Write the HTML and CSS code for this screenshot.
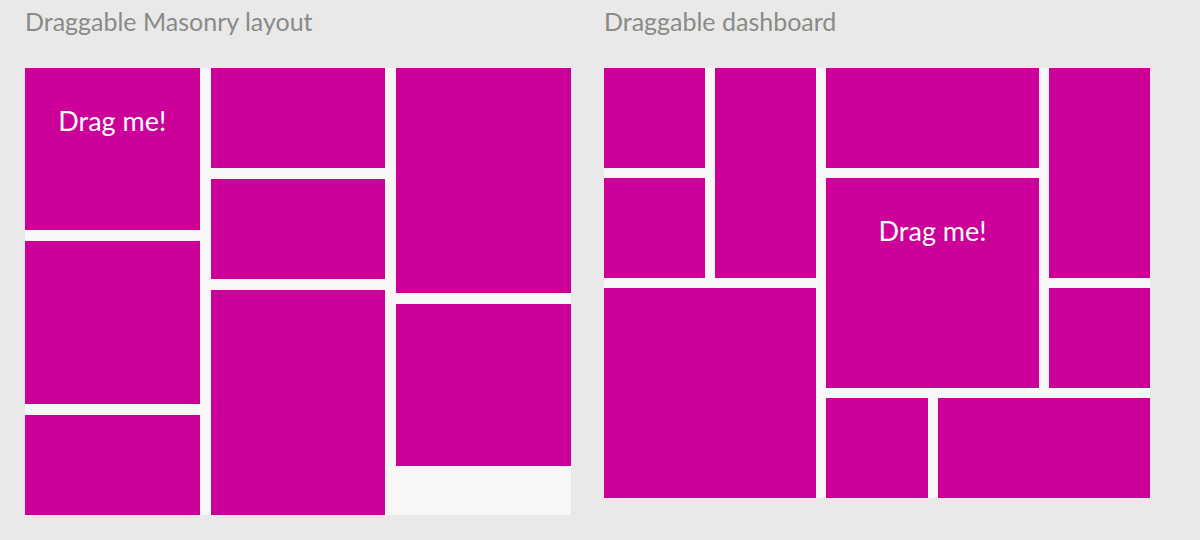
FILE: index.html
```html
<!DOCTYPE html>
<html>
<head>
  <title>Draggable layouts</title>
  <meta charset="utf-8">
  <link rel="stylesheet" href="styles.css">
</head>
<body>
<div class="demos">
  <section class="demo">
    <h2>Draggable Masonry layout</h2>
    <div class="masonry">
      <div class="m-col">
        <div class="tile h-md"><span class="label">Drag me!</span></div>
        <div class="tile h-md2"></div>
        <div class="tile h-sm"></div>
      </div>
      <div class="m-col">
        <div class="tile h-sm"></div>
        <div class="tile h-sm"></div>
        <div class="tile h-lg"></div>
      </div>
      <div class="m-col">
        <div class="tile h-lg"></div>
        <div class="tile h-md"></div>
      </div>
    </div>
  </section>

  <section class="demo">
    <h2>Draggable dashboard</h2>
    <div class="dashboard">
      <div class="tile" style="grid-area: 1 / 1 / 2 / 2"></div>
      <div class="tile" style="grid-area: 2 / 1 / 3 / 2"></div>
      <div class="tile" style="grid-area: 1 / 2 / 3 / 3"></div>
      <div class="tile" style="grid-area: 1 / 3 / 2 / 5"></div>
      <div class="tile" style="grid-area: 2 / 3 / 4 / 5"><span class="label">Drag me!</span></div>
      <div class="tile" style="grid-area: 1 / 5 / 3 / 6"></div>
      <div class="tile" style="grid-area: 3 / 5 / 4 / 6"></div>
      <div class="tile" style="grid-area: 3 / 1 / 5 / 3"></div>
      <div class="tile" style="grid-area: 4 / 3 / 5 / 4"></div>
      <div class="tile" style="grid-area: 4 / 4 / 5 / 6"></div>
    </div>
  </section>
</div>
</body>
</html>
```

FILE: styles.css
```css
body {
  margin: 0;
  background: #e9e9e9;
  font-family: Lato, 'Open Sans', sans-serif;
}
.demos {
  display: flex;
  gap: 33px;
  padding: 0 25px;
}
.demo {
  width: 546px;
}
h2 {
  margin: 6px 0 32px 0;
  font-size: 25px;
  font-weight: normal;
  color: #8a8a86;
  line-height: 30px;
  white-space: nowrap;
}
.tile {
  background: #cc0099;
  color: #fff;
  text-align: center;
}
.label {
  display: block;
  padding-top: 38px;
  font-size: 27px;
  line-height: 30px;
}

/* masonry */
.masonry {
  display: flex;
  gap: 11px;
  background: #f7f7f7;
}
.m-col {
  flex: 1;
  display: flex;
  flex-direction: column;
  gap: 11px;
}
.h-sm { height: 100px; }
.h-md { height: 162px; }
.h-md2 { height: 163px; }
.h-lg { height: 225px; }

/* dashboard */
.dashboard {
  display: grid;
  grid-template-columns: repeat(5, 1fr);
  grid-template-rows: repeat(4, 100px);
  gap: 10px;
  background: #f7f7f7;
}
```
